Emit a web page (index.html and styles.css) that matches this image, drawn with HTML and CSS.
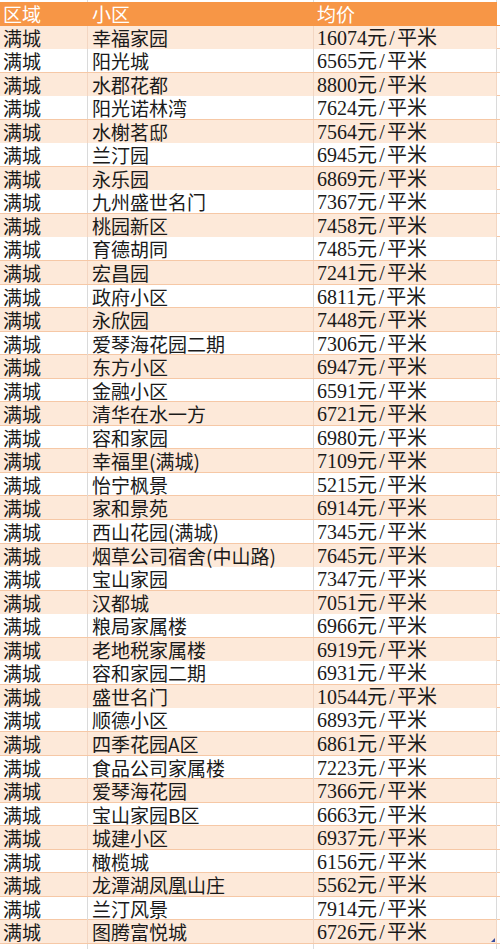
FILE: index.html
```html
<!DOCTYPE html>
<html lang="zh-CN">
<head>
<meta charset="utf-8">
<title>满城小区均价</title>
<link rel="stylesheet" href="styles.css">
</head>
<body>
<div class="sheet">
  <div class="strip"><span class="c a"></span><span class="c b"></span><span class="c p"></span></div>
  <div class="row head"><span class="c a">区域</span><span class="c b">小区</span><span class="c p">均价</span></div>
  <div class="row"><span class="c a">满城</span><span class="c b">幸福家园</span><span class="c p">16074元<span class="sl">/</span>平米</span></div>
  <div class="row"><span class="c a">满城</span><span class="c b">阳光城</span><span class="c p">6565元<span class="sl">/</span>平米</span></div>
  <div class="row"><span class="c a">满城</span><span class="c b">水郡花都</span><span class="c p">8800元<span class="sl">/</span>平米</span></div>
  <div class="row"><span class="c a">满城</span><span class="c b">阳光诺林湾</span><span class="c p">7624元<span class="sl">/</span>平米</span></div>
  <div class="row"><span class="c a">满城</span><span class="c b">水榭茗邸</span><span class="c p">7564元<span class="sl">/</span>平米</span></div>
  <div class="row"><span class="c a">满城</span><span class="c b">兰汀园</span><span class="c p">6945元<span class="sl">/</span>平米</span></div>
  <div class="row"><span class="c a">满城</span><span class="c b">永乐园</span><span class="c p">6869元<span class="sl">/</span>平米</span></div>
  <div class="row"><span class="c a">满城</span><span class="c b">九州盛世名门</span><span class="c p">7367元<span class="sl">/</span>平米</span></div>
  <div class="row"><span class="c a">满城</span><span class="c b">桃园新区</span><span class="c p">7458元<span class="sl">/</span>平米</span></div>
  <div class="row"><span class="c a">满城</span><span class="c b">育德胡同</span><span class="c p">7485元<span class="sl">/</span>平米</span></div>
  <div class="row"><span class="c a">满城</span><span class="c b">宏昌园</span><span class="c p">7241元<span class="sl">/</span>平米</span></div>
  <div class="row"><span class="c a">满城</span><span class="c b">政府小区</span><span class="c p">6811元<span class="sl">/</span>平米</span></div>
  <div class="row"><span class="c a">满城</span><span class="c b">永欣园</span><span class="c p">7448元<span class="sl">/</span>平米</span></div>
  <div class="row"><span class="c a">满城</span><span class="c b">爱琴海花园二期</span><span class="c p">7306元<span class="sl">/</span>平米</span></div>
  <div class="row"><span class="c a">满城</span><span class="c b">东方小区</span><span class="c p">6947元<span class="sl">/</span>平米</span></div>
  <div class="row"><span class="c a">满城</span><span class="c b">金融小区</span><span class="c p">6591元<span class="sl">/</span>平米</span></div>
  <div class="row"><span class="c a">满城</span><span class="c b">清华在水一方</span><span class="c p">6721元<span class="sl">/</span>平米</span></div>
  <div class="row"><span class="c a">满城</span><span class="c b">容和家园</span><span class="c p">6980元<span class="sl">/</span>平米</span></div>
  <div class="row"><span class="c a">满城</span><span class="c b">幸福里(满城)</span><span class="c p">7109元<span class="sl">/</span>平米</span></div>
  <div class="row"><span class="c a">满城</span><span class="c b">怡宁枫景</span><span class="c p">5215元<span class="sl">/</span>平米</span></div>
  <div class="row"><span class="c a">满城</span><span class="c b">家和景苑</span><span class="c p">6914元<span class="sl">/</span>平米</span></div>
  <div class="row"><span class="c a">满城</span><span class="c b">西山花园(满城)</span><span class="c p">7345元<span class="sl">/</span>平米</span></div>
  <div class="row"><span class="c a">满城</span><span class="c b">烟草公司宿舍(中山路)</span><span class="c p">7645元<span class="sl">/</span>平米</span></div>
  <div class="row"><span class="c a">满城</span><span class="c b">宝山家园</span><span class="c p">7347元<span class="sl">/</span>平米</span></div>
  <div class="row"><span class="c a">满城</span><span class="c b">汉都城</span><span class="c p">7051元<span class="sl">/</span>平米</span></div>
  <div class="row"><span class="c a">满城</span><span class="c b">粮局家属楼</span><span class="c p">6966元<span class="sl">/</span>平米</span></div>
  <div class="row"><span class="c a">满城</span><span class="c b">老地税家属楼</span><span class="c p">6919元<span class="sl">/</span>平米</span></div>
  <div class="row"><span class="c a">满城</span><span class="c b">容和家园二期</span><span class="c p">6931元<span class="sl">/</span>平米</span></div>
  <div class="row"><span class="c a">满城</span><span class="c b">盛世名门</span><span class="c p">10544元<span class="sl">/</span>平米</span></div>
  <div class="row"><span class="c a">满城</span><span class="c b">顺德小区</span><span class="c p">6893元<span class="sl">/</span>平米</span></div>
  <div class="row"><span class="c a">满城</span><span class="c b">四季花园A区</span><span class="c p">6861元<span class="sl">/</span>平米</span></div>
  <div class="row"><span class="c a">满城</span><span class="c b">食品公司家属楼</span><span class="c p">7223元<span class="sl">/</span>平米</span></div>
  <div class="row"><span class="c a">满城</span><span class="c b">爱琴海花园</span><span class="c p">7366元<span class="sl">/</span>平米</span></div>
  <div class="row"><span class="c a">满城</span><span class="c b">宝山家园B区</span><span class="c p">6663元<span class="sl">/</span>平米</span></div>
  <div class="row"><span class="c a">满城</span><span class="c b">城建小区</span><span class="c p">6937元<span class="sl">/</span>平米</span></div>
  <div class="row"><span class="c a">满城</span><span class="c b">橄榄城</span><span class="c p">6156元<span class="sl">/</span>平米</span></div>
  <div class="row"><span class="c a">满城</span><span class="c b">龙潭湖凤凰山庄</span><span class="c p">5562元<span class="sl">/</span>平米</span></div>
  <div class="row"><span class="c a">满城</span><span class="c b">兰汀风景</span><span class="c p">7914元<span class="sl">/</span>平米</span></div>
  <div class="row last"><span class="c a">满城</span><span class="c b">图腾富悦城</span><span class="c p">6726元<span class="sl">/</span>平米<span class="handle"></span></span></div>
  <div class="strip tail"><span class="c a"></span><span class="c b"></span><span class="c p"></span></div>
</div>
</body>
</html>
```

FILE: styles.css
```css
html, body {
  margin: 0;
  padding: 0;
  background: #ffffff;
}

.sheet {
  width: 500px;
  font-family: "Noto Sans CJK SC", "Liberation Sans", sans-serif;
  font-size: 19px;
  color: #1a1a1a;
}

.row, .strip {
  display: grid;
  grid-template-columns: 88px 226px 183px;
}

.strip {
  height: 2px;
}

.strip.tail {
  height: 5px;
}

.strip .c {
  border-right: 1px solid #dcdcdc;
}

.row {
  height: 23.55px;
  box-sizing: border-box;
  border-bottom: 1px solid #f6c8a6;
  width: 500px;
}

.c {
  display: block;
  box-sizing: border-box;
  white-space: nowrap;
  line-height: 22px;
  padding-top: 1px;
  border-right: 1px solid #dadada;
  position: relative;
}

.row .a { padding-left: 3px; }
.row .b { padding-left: 4px; }
.row .p {
  padding-left: 3px;
  font-family: "Liberation Serif", "Noto Sans CJK SC", serif;
  font-size: 20px;
}

.row .sl {
  display: inline-block;
  width: 10px;
  text-align: center;
}

.row:nth-child(odd) .c {
  background: #fde9d9;
  border-right-color: #f3d6c2;
}

.row.head .c {
  background: #f79646;
  color: #ffffff;
  border-right-color: #f79646;
  font-family: "Noto Sans CJK SC", sans-serif;
  font-size: 19px;
}

.row.head {
  border-bottom-color: #f79646;
}

.handle {
  position: absolute;
  right: 1px;
  bottom: 1px;
  width: 0;
  height: 0;
  border-left: 4px solid transparent;
  border-bottom: 4px solid #3a4fa0;
}
```
